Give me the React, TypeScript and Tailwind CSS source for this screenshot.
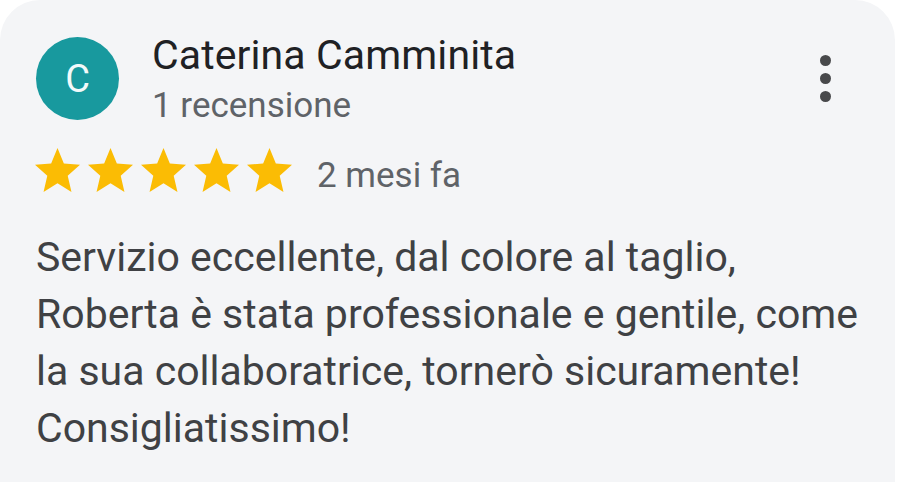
import React from 'react';

const Star: React.FC = () => (
  <svg viewBox="1.2 1.8 21.6 20.55" className="w-[45px] h-[44px]" preserveAspectRatio="none">
    <path
      fill="#fbbc04"
      d="M12 1.8l3.05 7.2 7.75.65-5.9 5.1 1.8 7.6L12 18.3l-6.7 4.05 1.8-7.6-5.9-5.1 7.75-.65z"
    />
  </svg>
);

const App: React.FC = () => {
  const text =
    'Servizio eccellente, dal colore al taglio, Roberta è stata professionale e gentile, come la sua collaboratrice, tornerò sicuramente! Consigliatissimo!';

  return (
    <div className="w-[902px] h-[482px] bg-white overflow-hidden" style={{ fontFamily: 'Roboto, "Noto Sans", sans-serif' }}>
      <div className="w-[895px] h-[520px] bg-[#f4f5f7] rounded-[40px] pl-[36px] pr-[30px] pt-[31px]">
        {/* header: avatar, name, menu */}
        <div className="flex items-start">
          <div className="mt-[6px] w-[83px] h-[83px] rounded-full bg-[#18999e] flex items-center justify-center text-[#f2fafa] text-[38px] leading-none shrink-0">
            C
          </div>
          <div className="ml-[33px] flex flex-col">
            <span className="text-[41px] leading-[48px] text-[#202124] tracking-[0.1px]">Caterina Camminita</span>
            <span className="text-[35px] leading-[42px] mt-[6px] text-[#5f6368]">1 recensione</span>
          </div>
          <div className="ml-auto mr-[34px] mt-[24px] flex flex-col gap-[7px]">
            <span className="w-[11px] h-[11px] rounded-full bg-[#48494b]" />
            <span className="w-[11px] h-[11px] rounded-full bg-[#48494b]" />
            <span className="w-[11px] h-[11px] rounded-full bg-[#48494b]" />
          </div>
        </div>

        {/* rating row */}
        <div className="flex items-start mt-[21px]">
          <div className="flex gap-[8px] -ml-[1px]">
            <Star />
            <Star />
            <Star />
            <Star />
            <Star />
          </div>
          <span className="ml-[25px] mt-[7px] text-[35px] leading-[42px] text-[#5f6368]">2 mesi fa</span>
        </div>

        {/* review body */}
        <p className="mt-[32px] text-[41px] leading-[57px] text-[#3f4144] max-w-[840px]">{text}</p>
      </div>
    </div>
  );
};

export default App;
